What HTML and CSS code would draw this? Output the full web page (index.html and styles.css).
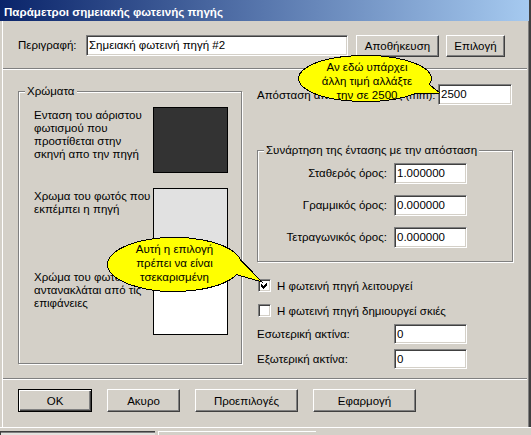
FILE: index.html
```html
<!DOCTYPE html>
<html lang="el">
<head>
    <meta charset="UTF-8">
    <meta name="viewport" content="width=device-width, initial-scale=1.0">
    <title>Παράμετροι σημειακής φωτεινής πηγής</title>
    <link rel="stylesheet" href="styles.css">
</head>
<body>
    <div class="window">
        <div class="titlebar">Παράμετροι σημειακής φωτεινής πηγής</div>

        <div class="desc-row">
            <span class="desc-label">Περιγραφή:</span>
            <div class="field desc-field">Σημειακή φωτεινή πηγή #2</div>
            <button class="btn btn-save">Αποθήκευση</button>
            <button class="btn btn-pick">Επιλογή</button>
        </div>

        <div class="separator sep-top"></div>

        <div class="main">
            <!-- αριστερά: χρώματα -->
            <fieldset class="group colors">
                <legend>Χρώματα</legend>
                <div class="colors-body">
                    <div class="color-row">
                        <span class="color-label">Ενταση του αόριστου<br>φωτισμού που<br>προστίθεται στην<br>σκηνή απο την πηγή</span>
                        <span class="swatch swatch-ambient"></span>
                    </div>
                    <div class="color-row">
                        <span class="color-label">Χρωμα του φωτός που<br>εκπέμπει η πηγή</span>
                        <span class="swatch swatch-emit"></span>
                    </div>
                    <div class="color-row">
                        <span class="color-label">Χρώμα του φωτός που<br>αντανακλάται από τίς<br>επιφάνειες</span>
                        <span class="swatch swatch-reflect"></span>
                    </div>
                </div>
            </fieldset>

            <!-- δεξιά: απόσταση / εξασθένηση -->
            <div class="right-col">
                <div class="dist-row">
                    <span>Απόσταση αποκοπής φωτός (mm):</span>
                    <div class="field field-dist">2500</div>
                </div>

                <fieldset class="group falloff">
                    <legend>Συνάρτηση της έντασης με την απόσταση</legend>
                    <div class="falloff-body">
                        <span class="row-label">Σταθερός όρος:</span>
                        <div class="field">1.000000</div>
                        <span class="row-label">Γραμμικός όρος:</span>
                        <div class="field">0.000000</div>
                        <span class="row-label">Τετραγωνικός όρος:</span>
                        <div class="field">0.000000</div>
                    </div>
                </fieldset>

                <div class="check-row check-first">
                    <span class="checkbox">
                        <svg width="11" height="11" viewBox="0 0 11 11"><path d="M2 4 L4 6 L8 2 L8 5 L4 9 L2 7 Z" fill="#000" shape-rendering="crispEdges"/></svg>
                    </span>
                    <span class="check-text">Η φωτεινή πηγή λειτουργεί</span>
                </div>
                <div class="check-row check-second">
                    <span class="checkbox"></span>
                    <span class="check-text">Η φωτεινή πηγή δημιουργεί σκιές</span>
                </div>

                <div class="radius-grid">
                    <span class="row-label">Εσωτερική ακτίνα:</span>
                    <div class="field">0</div>
                    <span class="row-label">Εξωτερική ακτίνα:</span>
                    <div class="field">0</div>
                </div>
            </div>
        </div>

        <div class="separator"></div>

        <div class="buttons">
            <button class="btn btn-default">OK</button>
            <button class="btn btn-small">Ακυρο</button>
            <button class="btn btn-wide">Προεπιλογές</button>
            <button class="btn btn-wide">Εφαρμογή</button>
        </div>

        <!-- συννεφάκια οδηγιών -->
        <div class="balloon balloon-dist">
            <svg width="134" height="47" shape-rendering="crispEdges">
                <path d="M131.2 29.5 L142 38 L117.9 38.3 A66.5 23 0 1 1 131.2 29.5 Z" fill="#ffff00" stroke="#000" stroke-width="1"/>
            </svg>
            <div class="balloon-text">Αν εδώ υπάρχει<br>άλλη τιμή αλλάξτε<br>την σε 2500</div>
        </div>

        <div class="balloon balloon-check">
            <svg width="135" height="55" shape-rendering="crispEdges">
                <path d="M133.5 22.8 L155 45 L129.6 37.6 A67 27 0 1 1 133.5 22.8 Z" fill="#ffff00" stroke="#000" stroke-width="1"/>
            </svg>
            <div class="balloon-text">Αυτή η επιλογή<br>πρέπει να είναι<br>τσεκαρισμένη</div>
        </div>
    </div>

    <div class="taskbar">
        <span class="task-btn task-active"></span>
        <span class="task-btn"></span>
    </div>
</body>
</html>
```

FILE: styles.css
```css
body {
    margin: 0;
    width: 531px;
    height: 435px;
    overflow: hidden;
    background: #d4d0c8;
    font-family: "Liberation Sans", Arial, sans-serif;
    font-size: 11.5px;
    color: #000;
}
.window {
    position: relative;
    height: 427px;
    box-shadow: inset 2px 0 #d4d0c8, inset 3px 0 #fff, inset -2px 0 #404040, inset -3px 0 #808080;
}
.titlebar {
    height: 21px;
    margin-right: 2px;
    padding-left: 4px;
    line-height: 23px;
    font-size: 11.6px;
    font-weight: bold;
    color: #fff;
    background: linear-gradient(to right, #0a246a, #a6caf0);
    white-space: nowrap;
}

/* fields and buttons, classic look */
.field {
    box-sizing: border-box;
    flex-shrink: 0;
    height: 21px;
    padding-left: 2px;
    line-height: 19px;
    background: #fff;
    border: 1px solid;
    border-color: #808080 #fff #fff #808080;
    box-shadow: inset 1px 1px #404040, inset -1px -1px #d4d0c8;
    white-space: nowrap;
}
.btn {
    box-sizing: border-box;
    height: 22px;
    padding: 0;
    font: inherit;
    color: #000;
    background: #d4d0c8;
    border: 1px solid;
    border-color: #fff #404040 #404040 #fff;
    box-shadow: inset -1px -1px #808080;
    border-radius: 0;
}
.btn-default {
    border-color: #000;
    box-shadow: inset 1px 1px #fff, inset -1px -1px #404040, inset -2px -2px #808080;
}

.desc-row {
    display: flex;
    align-items: flex-start;
    padding: 14px 0 0 18px;
}
.desc-label {
    width: 68px;
    line-height: 21px;
}
.desc-field {
    width: 262px;
}
.btn-save {
    width: 83px;
    margin-left: 8px;
}
.btn-pick {
    width: 59px;
    margin-left: 7px;
}

.separator {
    height: 0;
    border-top: 1px solid #808080;
    border-bottom: 1px solid #fff;
    margin: 0 4px 0 3px;
}
.sep-top {
    margin-top: 11px;
}

.main {
    display: grid;
    grid-template-columns: 224px 256px;
    column-gap: 15px;
    align-items: start;
    height: 308px;
    padding-left: 18px;
}

/* etched group boxes */
.group {
    box-sizing: border-box;
    margin: 0;
    padding: 0;
    min-inline-size: 0;
    border: 1px solid #808080;
    box-shadow: inset 1px 1px #fff, 1px 1px #fff;
}
.group legend {
    margin-left: 6px;
    padding: 0 2px;
    line-height: 14px;
    background: #d4d0c8;
    position: relative;
}
.colors {
    margin-top: 14px;
}
.colors-body {
    padding: 9px 12px 28px 15px;
}
.color-row {
    display: flex;
    align-items: flex-start;
    height: 66px;
}
.color-row + .color-row {
    margin-top: 15px;
}
.color-label {
    width: 119px;
    padding-top: 2px;
    line-height: 13px;
    white-space: nowrap;
}
.swatch {
    box-sizing: border-box;
    width: 75px;
    height: 66px;
    border: 1px solid #000;
}
.swatch-ambient {
    background: #333333;
}
.swatch-emit {
    background: #e1e1e1;
}
.swatch-reflect {
    background: #fff;
}

.right-col {
    padding-top: 14px;
}
.dist-row {
    display: flex;
    align-items: center;
    height: 21px;
    white-space: nowrap;
}
.field-dist {
    width: 74px;
    margin-left: auto;
    margin-right: 1px;
}
.falloff {
    margin-top: 38px;
    width: 256px;
}
.falloff-body {
    display: grid;
    grid-template-columns: 1fr 73px;
    column-gap: 7px;
    row-gap: 11px;
    padding: 6px 45px 13px 0;
}
.row-label {
    line-height: 21px;
    white-space: nowrap;
}
.falloff-body .row-label {
    text-align: right;
}

.check-row {
    display: flex;
    align-items: center;
    height: 13px;
    padding-left: 1px;
    white-space: nowrap;
}
.check-first {
    margin-top: 17px;
}
.check-second {
    margin-top: 12px;
}
.checkbox {
    box-sizing: border-box;
    width: 13px;
    height: 13px;
    background: #fff;
    border: 1px solid;
    border-color: #808080 #fff #fff #808080;
    box-shadow: inset 1px 1px #404040, inset -1px -1px #d4d0c8;
}
.checkbox svg {
    display: block;
}
.check-text {
    margin-left: 6px;
}

.radius-grid {
    display: grid;
    grid-template-columns: 137px 73px;
    grid-auto-rows: 20px;
    row-gap: 5px;
    margin-top: 7px;
}
.radius-grid .field {
    height: 20px;
    line-height: 18px;
}
.radius-grid .row-label {
    line-height: 20px;
}

.buttons {
    display: flex;
    gap: 15px;
    padding: 9px 0 0 18px;
}
.buttons .btn {
    height: 23px;
}
.btn-default {
    width: 74px;
}
.btn-small {
    width: 73px;
}
.btn-wide {
    width: 103px;
}

/* yellow hint balloons over the dialog */
.balloon {
    position: absolute;
}
.balloon svg {
    position: absolute;
    left: 0;
    top: 0;
    overflow: visible;
}
.balloon-text {
    position: relative;
    text-align: center;
    line-height: 14px;
    white-space: nowrap;
}
.balloon-dist {
    left: 298px;
    top: 55px;
    width: 134px;
    height: 47px;
}
.balloon-dist .balloon-text {
    padding: 5px 0 0 4px;
}
.balloon-check {
    left: 107px;
    top: 237px;
    width: 135px;
    height: 55px;
}
.balloon-check .balloon-text {
    padding-top: 5px;
}

.taskbar {
    box-sizing: border-box;
    height: 8px;
    border-top: 1px solid #fff;
    padding-top: 3px;
    display: flex;
    gap: 3px;
}
.task-btn {
    width: 157px;
    border-top: 1px solid #fff;
    border-left: 1px solid #fff;
}
.task-active {
    width: 154px;
    border-color: #404040;
    box-shadow: inset 0 1px #808080;
    background: #e4e2de;
}
```
